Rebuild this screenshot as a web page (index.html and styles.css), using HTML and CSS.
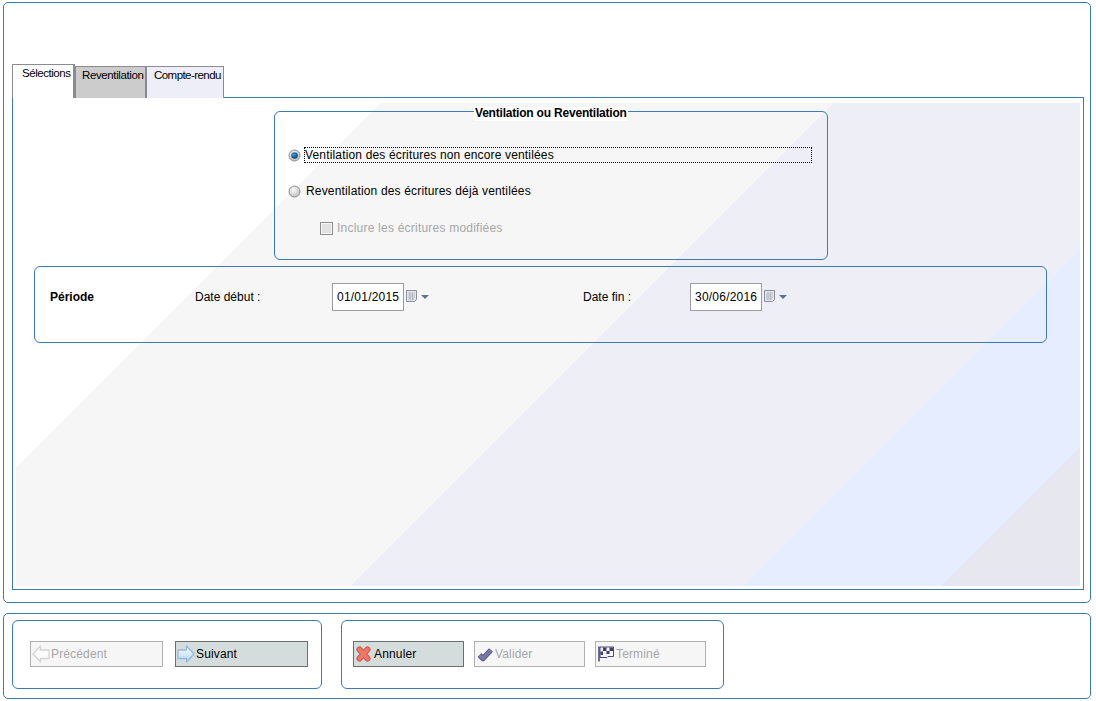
FILE: index.html
```html
<!DOCTYPE html>
<html lang="fr">
<head>
<meta charset="utf-8">
<title>Ventilation</title>
<link rel="stylesheet" href="styles.css">
</head>
<body>
<svg class="defs" width="0" height="0" aria-hidden="true">
  <defs>
    <radialGradient id="rg" cx="40%" cy="35%" r="70%"><stop offset="0" stop-color="#fbfbfb"/><stop offset="1" stop-color="#bcbcbc"/></radialGradient>
    <radialGradient id="rb" cx="40%" cy="35%" r="65%"><stop offset="0" stop-color="#3f9fd8"/><stop offset="1" stop-color="#083f72"/></radialGradient>
    <linearGradient id="ab" x1="0" y1="0" x2="0" y2="1"><stop offset="0" stop-color="#ffffff"/><stop offset="1" stop-color="#b4d4f4"/></linearGradient>
    <symbol id="calendar" viewBox="0 0 11 12"><path d="M.5.5h10v9l-2 2h-8z" fill="#e4e6ec" stroke="#8b8f9a"/><path d="M2 3h7M2 5h7M2 7h7M2 9h6M4 2.500V10M6.500 2.500V10" stroke="#a9adba" stroke-width=".7"/></symbol>
  </defs>
</svg>
<main class="frame main-frame">
  <div class="tabs">
    <div class="tab tab-active">Sélections</div>
    <div class="tab tab-grey">Reventilation</div>
    <div class="tab tab-light">Compte-rendu</div>
  </div>
  <section class="panel">
    <div class="art">
      <div class="group-mode">
        <div class="legend">Ventilation ou Reventilation</div>
        <div class="option option-first">
          <svg class="radio" viewBox="0 0 13 13"><circle cx="6.500" cy="6.500" r="5.500" fill="url(#rg)" stroke="#8f8f8f"/><circle cx="6.500" cy="6.500" r="3.300" fill="url(#rb)"/></svg>
          <span class="focus">Ventilation des écritures non encore ventilées</span>
        </div>
        <div class="option option-second">
          <svg class="radio" viewBox="0 0 13 13"><circle cx="6.500" cy="6.500" r="5.500" fill="url(#rg)" stroke="#8f8f8f"/></svg>
          <span class="option-label">Reventilation des écritures déjà ventilées</span>
        </div>
        <div class="check-row">
          <span class="check"></span>
          <span class="check-label">Inclure les écritures modifiées</span>
        </div>
      </div>
      <div class="group-period">
        <strong class="period-title">Période</strong>
        <span class="date-label date-label-start">Date début :</span>
        <span class="date-input">01/01/2015</span>
        <svg class="cal"><use href="#calendar"/></svg>
        <svg class="drop" viewBox="0 0 8 4"><path d="M0 0h8L4 4z" fill="#5f7390"/></svg>
        <span class="date-label date-label-end">Date fin :</span>
        <span class="date-input">30/06/2016</span>
        <svg class="cal"><use href="#calendar"/></svg>
        <svg class="drop" viewBox="0 0 8 4"><path d="M0 0h8L4 4z" fill="#5f7390"/></svg>
      </div>
    </div>
  </section>
</main>
<footer class="frame footer-frame">
  <div class="btn-group group-nav">
    <div class="btn btn-off btn-wide">
      <svg class="ico" viewBox="0 0 18 18"><path d="M1 9l7.500-8v4H17v8.500H8.500v3.500z" fill="#fbfbfb" stroke="#d4d4d4" stroke-width="1.300" stroke-linejoin="round"/></svg>
      <span>Précédent</span>
    </div>
    <div class="btn btn-on btn-wide">
      <svg class="ico" viewBox="0 0 18 18"><path d="M17 9L9.500 1v4H1v8.500h8.500v3.500z" fill="url(#ab)" stroke="#92b8e0" stroke-width="1.300" stroke-linejoin="round"/></svg>
      <span>Suivant</span>
    </div>
  </div>
  <div class="btn-group group-actions">
    <div class="btn btn-on btn-std">
      <svg class="ico" viewBox="0 0 18 18"><path d="M4.500 4.500l8 9M12.500 4.500l-8 9" fill="none" stroke="#cf5b4a" stroke-width="6" stroke-linecap="round"/><path d="M4.500 4.500l8 9M12.500 4.500l-8 9" fill="none" stroke="#f0766a" stroke-width="3.800" stroke-linecap="round"/></svg>
      <span>Annuler</span>
    </div>
    <div class="btn btn-off btn-std">
      <svg class="ico" viewBox="0 0 18 18"><path d="M3.500 10L7 13.500 15 5" fill="none" stroke="#5f5b88" stroke-width="5.400" stroke-linejoin="round"/><path d="M3.500 10L7 13.500 15 5" fill="none" stroke="#7d79a6" stroke-width="3.200" stroke-linejoin="round"/></svg>
      <span>Valider</span>
    </div>
    <div class="btn btn-off btn-std">
      <svg class="ico" viewBox="0 0 18 18"><path d="M2 1.500v15" stroke="#716f9c" stroke-width="2"/><path d="M3 2h13.500v9.500H11l-1 1H3z" fill="#f4f4fa" stroke="#4c4a78"/><path d="M6 2.500h3.500V6H6zM12.500 2.500H16V6h-3.500zM9.500 6h3v3h-3zM3.500 6.500H6V10H3.500z" fill="#3f3d6c"/></svg>
      <span>Terminé</span>
    </div>
  </div>
</footer>
</body>
</html>
```
FILE: styles.css
```css
* {
  box-sizing: border-box;
}

html,
body {
  margin: 0;
  background: #fff;
}

body {
  width: 1096px;
  height: 701px;
  padding: 2px 5px 0 3px;
  overflow: hidden;
  font-family: "Liberation Sans", Arial, sans-serif;
  font-size: 12px;
  color: #000;
}

.defs {
  position: absolute;
}

.frame {
  border: 1px solid #3a7ab8;
  border-radius: 5px;
}

.main-frame {
  height: 601px;
  padding: 61px 6px 0 8px;
}

.tabs {
  display: flex;
  align-items: flex-end;
  height: 34px;
  margin-bottom: -1px;
  position: relative;
}

.tab {
  height: 32px;
  padding: 2px 0 0 6px;
  border: 1px solid #8c8c90;
  border-bottom: 0;
  font-size: 11.5px;
  letter-spacing: -0.38px;
  line-height: 13px;
  white-space: nowrap;
}

.tab-active {
  position: relative;
  z-index: 2;
  width: 63px;
  height: 34px;
  padding-left: 9px;
  background: #fff;
  border-right-width: 2px;
  letter-spacing: -0.45px;
}

.tab-grey {
  width: 72px;
  background: #ccc;
  border-width: 1px 2px 2px 1px;
}

.tab-light {
  width: 77px;
  padding-left: 7px;
  background: #eeeef8;
  border-width: 1px 1px 0 0;
  letter-spacing: -0.55px;
}

.panel {
  height: 493px;
  padding: 5px 3px 3px;
  border: 1px solid #3a7ab8;
}

.art {
  height: 483px;
  padding-top: 8px;
  background: linear-gradient(
    135deg,
    #fff 258px,
    #f6f6f6 258px,
    #f6f6f6 578px,
    #eeeef7 578px,
    #eeeef7 856px,
    #e6edfe 856px,
    #e6edfe 996px,
    #e7e7f0 996px
  );
}

.group-mode {
  position: relative;
  width: 554px;
  height: 149px;
  margin-left: 258px;
  padding-top: 35px;
  border: 1px solid #3a7ab8;
  border-radius: 6px;
}

.legend {
  position: absolute;
  top: -5px;
  left: 199px;
  height: 14px;
  padding: 0 1px;
  background: #fff;
  font-weight: 700;
  font-size: 12px;
  line-height: 13px;
  letter-spacing: -0.2px;
  white-space: nowrap;
}

.option {
  display: flex;
  align-items: center;
  padding-left: 13px;
  height: 16px;
  letter-spacing: 0.16px;
}

.option-second {
  margin-top: 20px;
}

.radio {
  flex: none;
  width: 13px;
  height: 13px;
}

.focus {
  width: 508px;
  height: 16px;
  margin-left: 3px;
  border: 1px dotted #000;
  line-height: 14px;
}

.option-label {
  margin-left: 5px;
}

.check-row {
  display: flex;
  align-items: center;
  height: 16px;
  margin-top: 21px;
  padding-left: 45px;
}

.check {
  width: 13px;
  height: 13px;
  border: 1px solid #8f8f8f;
  background: #e2e2e2;
  box-shadow: inset 0 0 0 1px #f6f6f6;
}

.check-label {
  margin-left: 4px;
  color: #a6a6a6;
  letter-spacing: 0.22px;
}

.group-period {
  display: flex;
  align-items: center;
  width: 1013px;
  height: 77px;
  margin: 6px 0 0 18px;
  padding: 0 0 16px 15px;
  border: 1px solid #3a7ab8;
  border-radius: 6px;
}

.period-title {
  width: 145px;
}

.date-label {
  flex: none;
}

.date-label-start {
  width: 137px;
}

.date-label-end {
  width: 107px;
  margin-left: 154px;
}

.date-input {
  width: 72px;
  height: 28px;
  padding-left: 4px;
  border: 1px solid #9c9c9c;
  background: #fff;
  line-height: 26px;
  letter-spacing: 0.22px;
  white-space: nowrap;
}

.cal {
  width: 11px;
  height: 12px;
  margin: 0 0 1px 2px;
}

.drop {
  width: 8px;
  height: 4px;
  margin-left: 4px;
}

.footer-frame {
  display: flex;
  align-items: flex-start;
  height: 86px;
  margin-top: 10px;
  padding: 6px 0 0 8px;
  border-radius: 5px;
}

.btn-group {
  display: flex;
  align-items: center;
  height: 69px;
  padding-bottom: 1px;
  border: 1px solid #3a7ab8;
  border-radius: 6px;
}

.group-nav {
  width: 310px;
  padding-left: 17px;
  gap: 12px;
}

.group-actions {
  width: 383px;
  margin-left: 19px;
  padding-left: 11px;
  gap: 10px;
}

.btn {
  display: flex;
  align-items: center;
  height: 26px;
  padding-left: 1px;
  border: 1px solid;
  line-height: 13px;
  letter-spacing: 0.15px;
}

.btn-wide {
  width: 133px;
}

.btn-std {
  width: 111px;
}

.btn-on {
  background: #d5dddc;
  border-color: #6e6e6e;
  color: #000;
}

.btn-off {
  background: #f6f6f6;
  border-color: #b0b0b0;
  color: #a6a6a6;
}

.ico {
  flex: none;
  width: 18px;
  height: 18px;
  margin-right: 1px;
}
```
